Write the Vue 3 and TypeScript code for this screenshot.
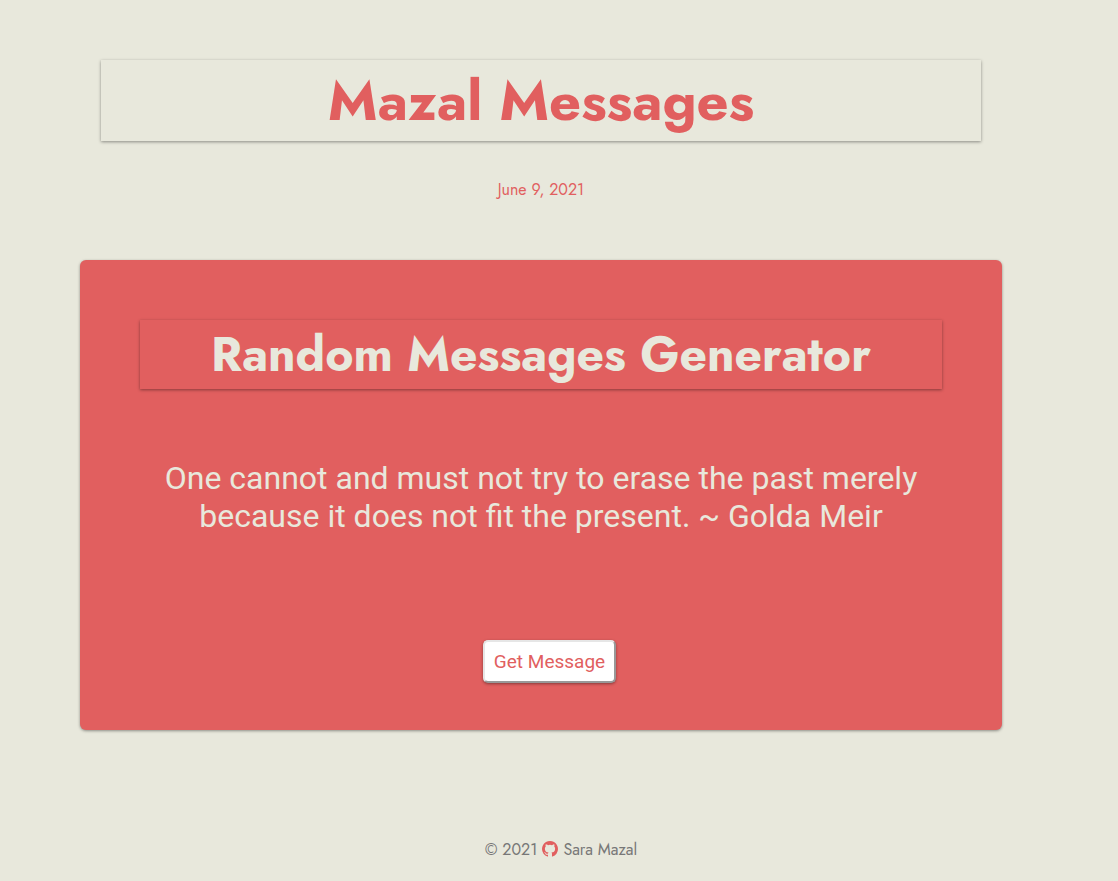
<script setup lang="ts">
import { ref } from 'vue'

const messages: string[] = [
  'One cannot and must not try to erase the past merely because it does not fit the present. ~ Golda Meir',
  'Trust yourself. Create the kind of self that you will be happy to live with all your life. ~ Golda Meir',
]
const index = ref(0)

function nextMessage(): void {
  index.value = (index.value + 1) % messages.length
}
</script>

<template>
  <div class="page">
    <header class="header">
      <h1 class="title">Mazal Messages</h1>
      <p class="date">June 9, 2021</p>
    </header>
    <main class="card">
      <h2 class="subtitle">Random Messages Generator</h2>
      <p class="message">{{ messages[index] }}</p>
      <button class="get" type="button" @click="nextMessage">Get Message</button>
    </main>
    <footer class="footer">
      <span>© 2021</span>
      <a class="link" href="#" aria-label="GitHub">
        <svg class="icon" viewBox="128 128 1536 1536" aria-hidden="true">
          <path fill="currentColor" d="M896 128q209 0 385.5 103t279.5 279.5 103 385.5q0 251-146.5 451.5t-378.5 277.5q-27 5-40-7t-13-30q0-3 .5-76.5t.5-134.5q0-97-52-142 57-6 102.5-18t94-39 81-66.5 53-105 20.5-150.5q0-119-79-206 37-91-8-204-28-9-81 11t-92 44l-38 24q-93-26-192-26t-192 26q-16-11-42.5-27t-83.5-38.5-85-13.5q-45 113-8 204-79 87-79 206 0 85 20.5 150t52.5 105 80.5 67 94 39 102.5 18q-39 36-49 103-21 10-45 15t-57 5-65.5-21.5-55.5-62.5q-19-32-48.5-52t-49.5-24l-20-3q-21 0-29 4.5t-5 11.5 9 14 13 12l7 5q22 10 43.5 38t31.5 51l10 23q13 38 44 61.5t67 30 69.5 7 55.5-3.5l23-4q0 38 .5 88.5t.5 54.5q0 18-13 30t-40 7q-232-77-378.5-277.5t-146.5-451.5q0-209 103-385.5t279.5-279.5 385.5-103z" />
        </svg>
      </a>
      <span>Sara Mazal</span>
    </footer>
  </div>
</template>

<style>
body {
  margin: 0;
  background: #e8e8dc;
}
</style>

<style scoped>
.page {
  padding: 60px 116px 20px 80px;
  font-family: Jost, Lato, sans-serif;
  color: #e15f5f;
}

.header {
  padding: 0 21px;
  text-align: center;
}

.title,
.subtitle {
  margin: 0;
  font-weight: 700;
  text-align: center;
  box-shadow: 0 1px 3px rgba(0, 0, 0, 0.4);
}

.title {
  font-size: 56px;
  line-height: 81px;
}

.date {
  margin: 37px 0 59px;
  font-size: 16px;
  line-height: 23px;
}

.card {
  display: flex;
  flex-direction: column;
  align-items: center;
  padding: 60px 60px 47px;
  border-radius: 6px;
  background: #e15f5f;
  color: #e8e8dc;
  box-shadow: 0 1px 3px rgba(0, 0, 0, 0.4);
}

.subtitle {
  align-self: stretch;
  font-size: 48px;
  line-height: 69px;
}

.message {
  margin: 70px 20px 105px;
  font-family: Roboto, sans-serif;
  font-size: 32px;
  line-height: 38px;
  text-align: center;
}

.get {
  margin-left: 17px;
  padding: 8px 9px;
  border: 2px solid;
  border-color: #e6e6e6 #999 #999 #e6e6e6;
  border-radius: 5px;
  background: #fff;
  color: #e15f5f;
  font-family: Roboto, sans-serif;
  font-size: 19px;
  line-height: 23px;
  box-shadow: 0 1px 3px rgba(0, 0, 0, 0.4);
  cursor: pointer;
}

.footer {
  display: flex;
  justify-content: center;
  gap: 5px;
  margin: 108px 0 0 40px;
  font-size: 16px;
  line-height: 23px;
  color: #777;
}

.link {
  display: flex;
  align-items: flex-start;
  padding-top: 3px;
  color: #e15f5f;
}

.icon {
  width: 16px;
  height: 16px;
}
</style>
